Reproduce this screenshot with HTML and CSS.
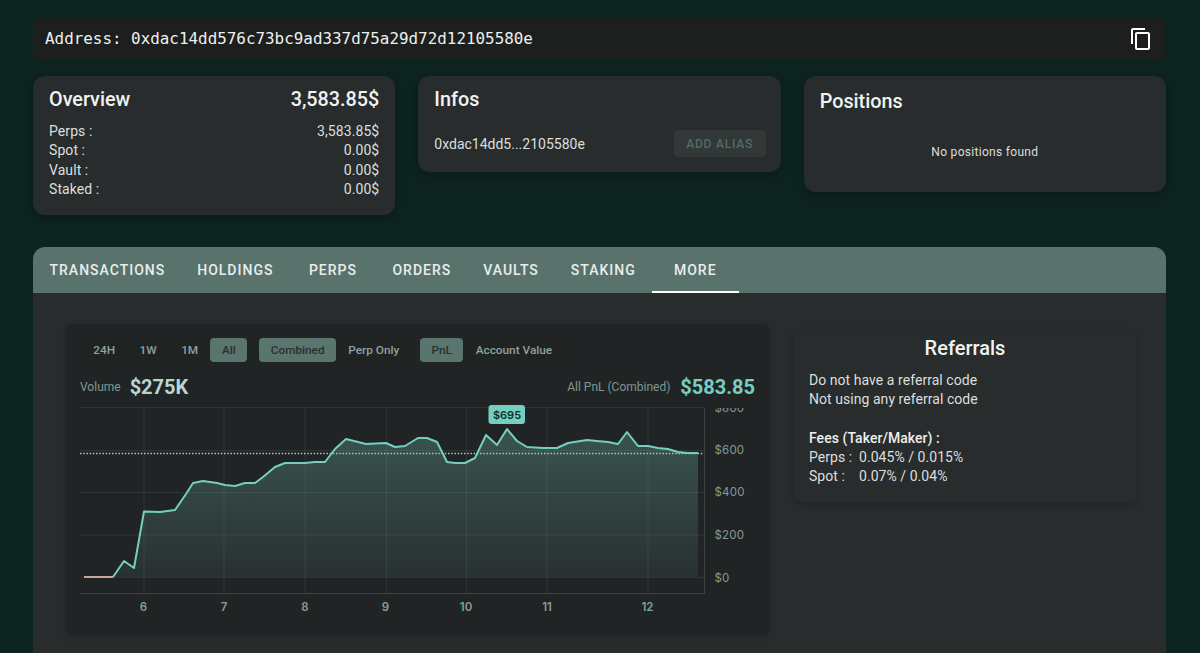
FILE: index.html
```html
<!DOCTYPE html>
<html lang="en">
<head>
<meta charset="utf-8">
<title>Address overview</title>
<link rel="stylesheet" href="styles.css">
</head>
<body>
<main class="page">
  <header class="address-bar">
    <span class="address-text">Address: 0xdac14dd576c73bc9ad337d75a29d72d12105580e</span>
    <svg class="copy-icon" viewBox="0 0 24 24" width="24" height="24" aria-hidden="true"><path d="M16 1H4c-1.1 0-2 .9-2 2v14h2V3h12V1zm3 4H8c-1.1 0-2 .9-2 2v14c0 1.1.9 2 2 2h11c1.1 0 2-.9 2-2V7c0-1.1-.9-2-2-2zm0 16H8V7h11v14z"/></svg>
  </header>

  <section class="summary">
    <article class="card overview">
      <div class="row title-row"><h2>Overview</h2><span>3,583.85$</span></div>
      <div class="row"><span>Perps :</span><span>3,583.85$</span></div>
      <div class="row"><span>Spot :</span><span>0.00$</span></div>
      <div class="row"><span>Vault :</span><span>0.00$</span></div>
      <div class="row"><span>Staked :</span><span>0.00$</span></div>
    </article>
    <article class="card infos">
      <h2>Infos</h2>
      <div class="infos-row"><span>0xdac14dd5...2105580e</span><button class="alias" disabled>ADD ALIAS</button></div>
    </article>
    <article class="card positions">
      <h2>Positions</h2>
      <p class="empty">No positions found</p>
    </article>
  </section>

  <section class="panel">
    <nav class="tabs">
      <a class="tab">Transactions</a>
      <a class="tab">Holdings</a>
      <a class="tab">Perps</a>
      <a class="tab">Orders</a>
      <a class="tab">Vaults</a>
      <a class="tab">Staking</a>
      <a class="tab active">More</a>
    </nav>
    <div class="panel-body">
      <div class="chart-card">
        <div class="controls">
          <div class="group">
            <span class="opt">24H</span><span class="opt">1W</span><span class="opt">1M</span><span class="opt on">All</span>
            <span class="opt on wide">Combined</span><span class="opt">Perp Only</span>
          </div>
          <div class="group">
            <span class="opt on">PnL</span><span class="opt">Account Value</span>
          </div>
        </div>
        <div class="stats">
          <div class="stat"><span class="stat-label">Volume</span><strong class="volume">$275K</strong></div>
          <div class="stat"><span class="stat-label">All PnL (Combined)</span><strong class="pnl">$583.85</strong></div>
        </div>
        <svg class="chart" width="690" height="216" viewBox="80 404 690 216" role="img" aria-label="PnL chart">
          <defs>
            <linearGradient id="area" x1="0" y1="429" x2="0" y2="577" gradientUnits="userSpaceOnUse">
              <stop offset="0" stop-color="#3a5450"/>
              <stop offset="1" stop-color="#283130"/>
            </linearGradient>
            <clipPath id="plotclip"><rect x="700" y="408" width="70" height="190"/></clipPath>
          </defs>
          <path class="fill" d="M113 577L124 561L134 568L144 511.500L160 512L175 510L186 494L193 483L203 481L217 483L225 485L235 486L245 483L255 483L263 477L275 467L285 463L305 463L315 462L325 462L335 449L346 439L366 444L386 443L395 447L405 446L418 438L427 438L437 442L447 462L455 463L465 463L475 458L486 435L497 445L507 429L517 441L527 447L543 448L557 448L568 443L587 440L597 441L608 442L618 444L627 432L638 446L648 446L658 448L668 449L678 452L687 453L698 453V577Z"/>
          <g class="grid">
            <path d="M80 407.500H704M80 450.500H704M80 492.500H704M80 535H704M80 577.500H704"/>
            <path d="M144 408V594M224 408V594M305 408V594M386.500 408V594M466.500 408V594M547 408V594M648 408V594"/>
          </g>
          <path class="axis" d="M80 593.500H704.500V408"/>
          <path class="dots" d="M80 453.500H704"/>
          <path class="flat" d="M84 577H113"/>
          <path class="line" d="M113 577L124 561L134 568L144 511.500L160 512L175 510L186 494L193 483L203 481L217 483L225 485L235 486L245 483L255 483L263 477L275 467L285 463L305 463L315 462L325 462L335 449L346 439L366 444L386 443L395 447L405 446L418 438L427 438L437 442L447 462L455 463L465 463L475 458L486 435L497 445L507 429L517 441L527 447L543 448L557 448L568 443L587 440L597 441L608 442L618 444L627 432L638 446L648 446L658 448L668 449L678 452L687 453L698 453"/>
          <g class="y-labels">
            <text x="714.500" y="411.500" clip-path="url(#plotclip)">$800</text>
            <text x="714.500" y="454">$600</text>
            <text x="714.500" y="496">$400</text>
            <text x="714.500" y="539">$200</text>
            <text x="714.500" y="581.500">$0</text>
          </g>
          <g class="x-labels">
            <text x="143.500" y="611">6</text>
            <text x="224" y="611">7</text>
            <text x="305" y="611">8</text>
            <text x="385.500" y="611">9</text>
            <text x="466" y="611">10</text>
            <text x="547" y="611">11</text>
            <text x="647.500" y="611">12</text>
          </g>
          <rect class="tip" x="488.500" y="405" width="36.500" height="19" rx="3"/>
          <text class="tip-text" x="507" y="419">$695</text>
        </svg>
      </div>
      <aside class="referrals">
        <h2>Referrals</h2>
        <p>Do not have a referral code</p>
        <p>Not using any referral code</p>
        <p class="fees-title">Fees (Taker/Maker) :</p>
        <p class="fee"><span>Perps :</span><span>0.045% / 0.015%</span></p>
        <p class="fee"><span>Spot :</span><span>0.07% / 0.04%</span></p>
      </aside>
    </div>
  </section>
</main>
</body>
</html>
```
FILE: styles.css
```css
* { box-sizing: border-box; }
html, body { margin: 0; height: 653px; overflow: hidden; }
body {
  background: #0c2320;
  color: #e6e9e8;
  font-family: Roboto, "Liberation Sans", sans-serif;
  font-size: 14px;
}
.page { padding: 18px 34px 0 33px; }
h2 { margin: 0; font-size: 19.8px; font-weight: 500; letter-spacing: 0; line-height: 24px; color: #f1f3f2; }

.address-bar {
  height: 42px;
  display: flex;
  align-items: center;
  justify-content: space-between;
  padding: 0 1px 2px 12px;
  background: #1d1f1e;
  border-radius: 6px;
  margin-bottom: 16px;
}
.address-text { font-family: "DejaVu Sans Mono", monospace; font-size: 15.9px; color: #eef0ef; }
.copy-icon { fill: #fff; margin: 2px 12px 0 0; }

.summary {
  display: grid;
  grid-template-columns: repeat(3, 1fr);
  column-gap: 23px;
  align-items: start;
  margin-bottom: 32px;
}
.card {
  background: #282c2c;
  border-radius: 12px;
  padding: 12px 16px;
  box-shadow: 0 3px 8px rgba(0,0,0,.18);
}
.row { display: flex; justify-content: space-between; line-height: 19.3px; letter-spacing: .08px; color: #dcdfde; }
.title-row { font-size: 19.8px; font-weight: 500; line-height: 24px; letter-spacing: 0; margin-bottom: 10px; color: #f1f3f2; }
.overview { height: 139px; }
.infos { height: 96px; }
.infos-row { display: flex; align-items: center; justify-content: space-between; margin-top: 18px; letter-spacing: 0; color: #dcdfde; }
.alias {
  width: 92px;
  height: 27px;
  border: 0;
  border-radius: 4px;
  background: #313837;
  color: #566a66;
  font: 500 12px Roboto, sans-serif;
  letter-spacing: .8px;
  padding: 0;
  margin-right: -1px;
}
.positions { height: 116px; padding-top: 14px; }
.empty { margin: 29px 0 0; text-align: center; font-size: 12px; letter-spacing: .3px; color: #dcdfde; line-height: 18px; }

.panel { background: #282c2c; border-radius: 12px 12px 0 0; height: 420px; }
.tabs { display: flex; height: 46px; padding-left: .5px; background: #59726c; border-radius: 12px 12px 0 0; }
.tab {
  min-width: 87px;
  padding: 0 16px;
  display: flex;
  align-items: center;
  justify-content: center;
  font-size: 14px;
  font-weight: 500;
  letter-spacing: 1px;
  text-transform: uppercase;
  color: #e9eeed;
}
.tab.active { border-bottom: 2px solid #fff; padding-top: 2px; }

.panel-body { display: flex; align-items: flex-start; padding: 31px 0 0 32px; gap: 24px; }
.chart-card {
  width: 705px;
  height: 311px;
  padding: 13px 0 0 15px;
  background: #212424;
  border-radius: 8px;
  box-shadow: 0 2px 8px rgba(0,0,0,.12);
}
.controls { display: flex; gap: 9px; height: 26px; }
.group { display: flex; align-items: center; height: 26px; background: #1f2322; border-radius: 8px; padding: 0 1px; }
.opt { font-size: 11.8px; font-weight: 500; color: #8fa29e; padding: 0 12.25px; line-height: 24px; height: 24px; border-radius: 4px; white-space: nowrap; }
.opt.on { background: #5a746e; color: #27322f; padding: 0 11.5px; }
.opt.wide { margin-left: 12px; }
.group:first-child { width: 331px; }
.group:last-child { width: 145px; padding-left: 0; }

.stats { display: flex; justify-content: space-between; align-items: center; width: 675px; height: 30px; margin-top: 9px; }
.stat { display: flex; align-items: center; gap: 10px; }
.stat:first-child { gap: 9px; }
.stat-label { font-size: 12px; color: #7f9793; }
.volume { font-size: 20px; font-weight: 700; color: #b4d8d1; padding-bottom: 1px; }
.pnl { font-size: 20px; font-weight: 700; color: #75cfc0; padding-bottom: 1px; }

.chart { display: block; margin-top: 2px; }
.grid path { stroke: rgba(130,160,155,.14); stroke-width: 1; fill: none; }
.fill { fill: url(#area); }
.axis { stroke: #3b4543; stroke-width: 1; fill: none; }
.dots { stroke: #a9c9c3; stroke-width: 1.5; stroke-dasharray: 1.5 1.7; fill: none; }
.line { stroke: #75cfc0; stroke-width: 2; fill: none; stroke-linejoin: round; }
.flat { stroke: #c9a59d; stroke-width: 2; fill: none; }
.y-labels text { font: 400 11.5px Inter, sans-serif; letter-spacing: .2px; fill: #839a96; }
.x-labels text { font: 600 11.5px Inter, sans-serif; fill: #7fa199; text-anchor: middle; }
.tip { fill: #75cfc0; }
.tip-text { font: 600 11px Inter, sans-serif; fill: #10302b; text-anchor: middle; }

.referrals {
  width: 342px;
  height: 172px;
  margin-top: 6px;
  padding: 6px 15px 0;
  background: #282c2c;
  border-radius: 8px;
  box-shadow: 0 3px 8px rgba(0,0,0,.16);
}
.referrals h2 { text-align: center; font-size: 20px; margin-bottom: 11px; }
.referrals p { margin: 0; line-height: 19.3px; letter-spacing: .05px; color: #dcdfde; }
.referrals .fees-title { margin-top: 19.3px; font-weight: 500; color: #eef0ef; }
.fee { display: flex; }
.fee span:first-child { width: 50px; }
```
